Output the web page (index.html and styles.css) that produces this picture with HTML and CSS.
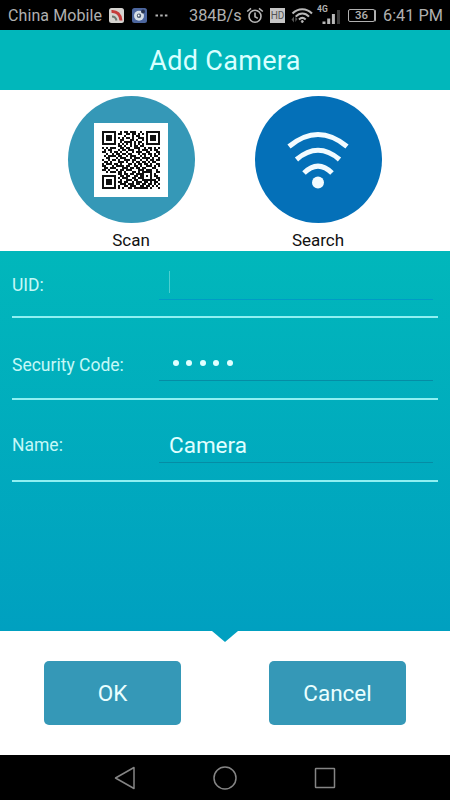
FILE: index.html
```html
<!DOCTYPE html>
<html lang="en">
<head>
    <meta charset="UTF-8">
    <meta name="viewport" content="width=device-width, initial-scale=1.0">
    <title>Add Camera</title>
    <link rel="stylesheet" href="styles.css">
</head>
<body>

    <div class="status-bar">
        <span class="carrier">China Mobile</span>
        <svg class="app-icon" width="15" height="15" viewBox="0 0 15 15">
            <rect width="15" height="15" rx="2.5" fill="#d5d3d0"/>
            <path d="M2.500 3.500C8 3 11.500 6.500 12 12.500" fill="none" stroke="#c43b3b" stroke-width="3"/>
            <path d="M3 8.500C5.500 8.500 7 10 7.500 12.500" fill="none" stroke="#6c7770" stroke-width="2"/>
        </svg>
        <svg class="app-icon second" width="15" height="15" viewBox="0 0 15 15">
            <rect width="15" height="15" rx="2.500" fill="#4c669e"/>
            <circle cx="7" cy="7.800" r="5" fill="#d7dfe6"/>
            <circle cx="7" cy="7.800" r="2.200" fill="#4b5b70"/>
            <circle cx="6.700" cy="7.500" r="0.900" fill="#fff"/>
            <circle cx="11" cy="3.500" r="2" fill="#26334e"/>
        </svg>
        <svg class="dots" width="13" height="3" viewBox="0 0 13 3">
            <path d="M0.500 0.500h2.500v2h-2.500zM5.200 0.500h2.500v2h-2.500zM9.900 0.500h2.500v2h-2.500z" fill="#b4b4b4"/>
        </svg>
        <span class="speed">384B/s</span>
        <svg class="alarm" width="18" height="17" viewBox="0 0 18 17" fill="none" stroke="#b8b8b8" stroke-width="1.600">
            <circle cx="9" cy="9.300" r="6"/>
            <path d="M9 5.600v4.200l2.800 1.600M1.200 4.500L5 1.300M16.800 4.500L13 1.300"/>
        </svg>
        <span class="hd">HD</span>
        <svg class="wifi" width="22" height="17" viewBox="0 0 22 17" fill="none" stroke="#b8b8b8" stroke-width="2">
            <path d="M1.500 6.500C7 0.800 15.500 0.800 21 6.500M4.700 9.600C8.700 5.500 14 5.500 18 9.600M8 12.500C10 10.500 12.500 10.500 14.700 12.500"/>
            <circle cx="11.300" cy="14.500" r="1" fill="#b8b8b8" stroke-width="1"/>
            <path d="M0.500 12.500l2.500-3v6zM6.500 12l-2.200 3v-5z" fill="#555" stroke="none"/>
        </svg>
        <div class="signal">
            <span class="network">4G</span>
            <svg width="20" height="16" viewBox="0 0 20 16">
                <path d="M0.500 12.500h3v2.500h-3zM5.200 9.500h3v5.500h-3zM9.900 5h3v10h-3z" fill="#b8b8b8"/>
                <path d="M15 1h3v14h-3z" fill="#3a3a3a"/>
            </svg>
        </div>
        <div class="battery">36</div>
        <span class="time">6:41 PM</span>
    </div>

    <div class="title">Add Camera</div>

    <div class="modes">
        <div class="mode">
            <div class="circle scan">
                <div class="qr-card">
                    <svg id="qr" width="58" height="58" viewBox="0 0 29 29" shape-rendering="crispEdges"></svg>
                </div>
            </div>
            <span class="mode-label">Scan</span>
        </div>
        <div class="mode">
            <div class="circle search">
                <svg width="64" height="60" viewBox="0 0 64 60" fill="none" stroke="#f2fbff" stroke-width="5">
                    <path d="M3 16.500Q32 -7.500 61 16.500M10.500 29.500Q32 11 53.500 29.500M18 43Q32 29 46 43"/>
                    <circle cx="32" cy="52.500" r="6" fill="#f2fbff" stroke="none"/>
                </svg>
            </div>
            <span class="mode-label">Search</span>
        </div>
    </div>

    <div class="form">
        <div class="row first">
            <span class="label">UID:</span>
            <div class="field active"><span class="cursor"></span></div>
        </div>
        <div class="row">
            <span class="label">Security Code:</span>
            <div class="field password"><i></i><i></i><i></i><i></i><i></i></div>
        </div>
        <div class="row last">
            <span class="label">Name:</span>
            <div class="field">Camera</div>
        </div>
    </div>

    <div class="actions">
        <div class="arrow"></div>
        <button class="button">OK</button>
        <button class="button">Cancel</button>
    </div>

    <div class="nav-bar">
        <svg width="22" height="24" viewBox="0 0 22 24" fill="none" stroke="#858585" stroke-width="1.500" stroke-linejoin="round">
            <path d="M20 1.500v21L1.500 12z"/>
        </svg>
        <svg width="24" height="24" viewBox="0 0 24 24" fill="none" stroke="#858585" stroke-width="1.500">
            <circle cx="12" cy="12" r="11"/>
        </svg>
        <svg width="22" height="22" viewBox="0 0 22 22" fill="none" stroke="#858585" stroke-width="1.500">
            <rect x="1.500" y="1.500" width="19" height="19" rx="0.500"/>
        </svg>
    </div>

    <script src="qr.js"></script>
</body>
</html>
```

FILE: styles.css
```css
body {
    margin: 0;
    width: 450px;
    height: 800px;
    display: flex;
    flex-direction: column;
    overflow: hidden;
    background-color: #fff;
    font-family: Roboto, sans-serif;
}
svg {
    display: block;
    flex-shrink: 0;
}
/* Phone status bar */
.status-bar {
    height: 30px;
    box-sizing: border-box;
    padding-left: 8px;
    display: flex;
    align-items: center;
    background-color: #000;
    color: #b0b0b0;
    font-size: 16px;
    white-space: nowrap;
}
.carrier {
    width: 101px;
    letter-spacing: 0.1px;
}
.app-icon.second {
    margin-left: 8px;
}
.dots {
    margin-left: 8px;
}
.speed {
    width: 54px;
    margin-left: 21px;
    font-size: 16.3px;
}
.alarm {
    margin-left: 3px;
}
.hd {
    width: 15px;
    height: 15px;
    margin-left: 6px;
    background-color: #c5c5c5;
    color: #555;
    font-size: 10px;
    line-height: 16px;
    text-align: center;
}
.wifi {
    margin-left: 6px;
}
.signal {
    width: 26px;
    height: 22px;
    margin-left: 4px;
    display: flex;
    flex-direction: column;
}
.signal svg {
    margin: -3px 0 0 5px;
}
.network {
    height: 8px;
    font-size: 8.5px;
    line-height: 10px;
    font-weight: bold;
}
.battery {
    width: 27px;
    height: 13px;
    box-sizing: border-box;
    margin-left: 5px;
    border: 1.5px solid #b0b0b0;
    border-radius: 2px;
    box-shadow: 1.5px 0 0 -0.5px #b0b0b0;
    font-size: 11.5px;
    line-height: 11px;
    font-weight: 500;
    text-align: center;
}
.time {
    margin-left: 8px;
    font-size: 16.3px;
}
/* Header */
.title {
    height: 60px;
    line-height: 63px;
    background-color: #01b7bb;
    color: #d8ffff;
    font-size: 27px;
    text-align: center;
    letter-spacing: 0.3px;
}
.modes {
    height: 161px;
    box-sizing: border-box;
    padding-top: 6px;
    padding-right: 1px;
    display: flex;
    justify-content: center;
    gap: 60px;
}
.mode {
    display: flex;
    flex-direction: column;
    align-items: center;
}
.circle {
    width: 127px;
    height: 127px;
    border-radius: 50%;
    display: flex;
    justify-content: center;
    align-items: center;
}
.circle.scan {
    background-color: #3598b7;
}
.circle.search {
    background-color: #0470b8;
}
.qr-card {
    width: 74px;
    height: 74px;
    display: flex;
    justify-content: center;
    align-items: center;
    background-color: #fff;
}
.mode-label {
    margin-top: 7px;
    color: #111;
    font-size: 17px;
    line-height: 20px;
}
/* Form */
.form {
    height: 380px;
    box-sizing: border-box;
    flex-shrink: 0;
    padding: 0 12px;
    background: linear-gradient(#01b7bb, #00a0c0);
}
.row {
    height: 82px;
    box-sizing: border-box;
    display: flex;
    align-items: flex-start;
    border-bottom: 2px solid #8ff0f2;
}
.row.first {
    height: 67px;
}
.label {
    width: 147px;
    padding-top: 36px;
    color: #c5f8f7;
    font-size: 17.5px;
    line-height: 22px;
}
.row.first .label {
    padding-top: 23px;
}
.row.last .label {
    padding-top: 34px;
}
.field {
    width: 274px;
    height: 36px;
    box-sizing: border-box;
    margin-top: 27px;
    padding-left: 10px;
    display: flex;
    align-items: center;
    border-bottom: 1px solid #058da5;
    color: #e0ffff;
    font-size: 22.5px;
}
.field.active {
    margin-top: 13px;
    border-color: #009bc6;
}
.cursor {
    width: 1px;
    height: 22px;
    background-color: #4ccfd0;
}
.password {
    gap: 7.4px;
    padding-left: 14px;
}
.password i {
    width: 6px;
    height: 6px;
    border-radius: 50%;
    background-color: #e0ffff;
}
/* Buttons */
.actions {
    position: relative;
    height: 124px;
    display: flex;
    justify-content: center;
    align-items: center;
    gap: 88px;
}
.arrow {
    position: absolute;
    top: 0;
    left: 212px;
    border: 13px solid transparent;
    border-top: 11px solid #00a0c0;
    border-bottom: 0;
}
.button {
    width: 137px;
    height: 64px;
    border: none;
    border-radius: 5px;
    background-color: #3598b7;
    color: #eaffff;
    font-family: inherit;
    font-size: 22.5px;
}
/* Navigation bar */
.nav-bar {
    height: 45px;
    display: flex;
    justify-content: center;
    align-items: center;
    gap: 77px;
    background-color: #000;
}
```

FILE: qr.js
```js
// Modules of the QR code, one string per row
var rows = [
    "11111110010110111001001111111",
    "10000010110011011010101000001",
    "10111010000100010110001011101",
    "10111010101011010011101011101",
    "10111010011000110100101011101",
    "10000010010111101011001000001",
    "11111110101010101010101111111",
    "00000000110100101101100000000",
    "10101110011011001110010110101",
    "01011000101101110010111010110",
    "11001011010010010111001100011",
    "00100101101101100010110110101",
    "01011110110010111001010010110",
    "00110001011100101110111101001",
    "10010110100111011001001011011",
    "01101000111010010110110101100",
    "10111011010001101011011010011",
    "11000101111011001101001110101",
    "01101110001110110110110001100",
    "11010001011011100011101110010",
    "00101110110100011010111110011",
    "00000000110110110111100010100",
    "11111110011011001101101010110",
    "10000010101110011011100010011",
    "10111010010011101100111111101",
    "10111010110110010111011010110",
    "10111010011101110110110110101",
    "10000010100110111001101101010",
    "11111110101001101111111010001"
];

var path = "";
for (var y = 0; y < rows.length; y++) {
    for (var x = 0; x < rows[y].length; x++) {
        if (rows[y][x] === "1") {
            path += "M" + x + " " + y + "h1v1h-1z";
        }
    }
}
document.getElementById("qr").innerHTML = '<path d="' + path + '" fill="#111"/>';
```
